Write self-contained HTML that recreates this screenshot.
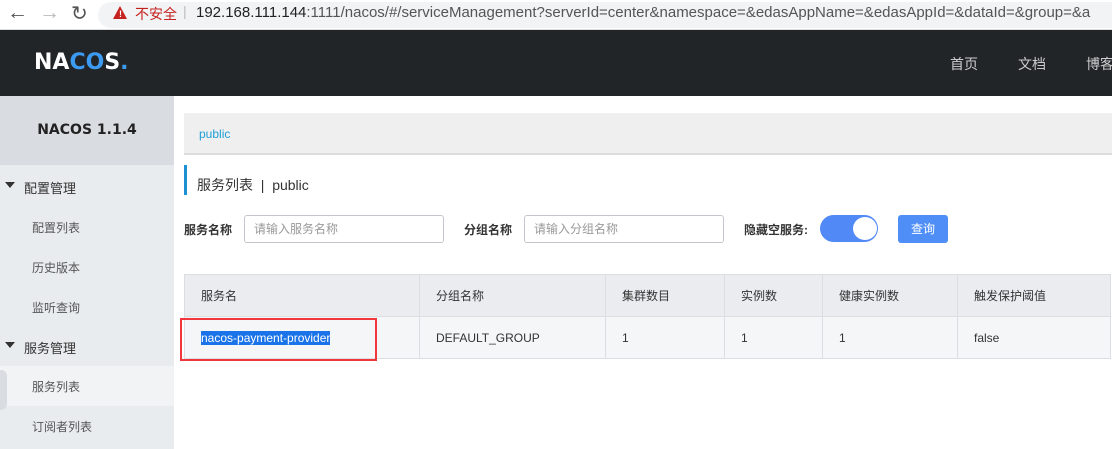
<!DOCTYPE html>
<html><head><meta charset="utf-8"><style>
*{margin:0;padding:0;box-sizing:border-box}
body{width:1112px;height:449px;overflow:hidden;background:#fff;font-family:"Liberation Sans","Noto Sans CJK SC",sans-serif;position:relative;color:#333}
.a{position:absolute}
.url{left:0;top:0;width:1112px;height:30px;background:#fff;border-bottom:1px solid #ddd}
.omni{left:98px;top:2px;width:1030px;height:26px;background:#f1f3f4;border-radius:13px}
.hdr{left:0;top:30px;width:1112px;height:66px;background:#222528}
.side{left:0;top:96px;width:174px;height:353px;background:#e9ecef}
.stitle{left:0;top:96px;width:174px;height:69px;background:#d9dde2;font-weight:bold;font-size:14px;color:#222;text-align:center;line-height:69px;font-family:"DejaVu Sans",sans-serif}
.mi{font-size:13px;color:#333}
.si{font-size:12px;color:#555}
td,th{font-size:12px;color:#333;text-align:left;font-weight:normal;padding-left:16px;border:1px solid #dcdee3}
table{border-collapse:collapse;position:absolute;left:184px;top:274px;width:927px}
th{height:42px;background:#ebecf0}
td{height:42px;background:#f5f6f8}
.lbl{font-size:12px;font-weight:bold;color:#333}
.inp{height:28px;border:1px solid #c4c6cf;border-radius:3px;font-size:12px;color:#999;padding-left:9px;line-height:26px;background:#fff}
</style></head><body>
<div class="a url"></div>
<div class="a omni"></div>
<div class="a" style="left:7px;top:1px;font-size:21px;color:#555">&#8592;</div>
<div class="a" style="left:39px;top:1px;font-size:21px;color:#bbb">&#8594;</div>
<div class="a" style="left:71px;top:1px;font-size:20px;color:#555">&#8635;</div>
<div class="a" style="left:113px;top:6px;width:0;height:0;border-left:7px solid transparent;border-right:7px solid transparent;border-bottom:13px solid #c5221f"></div>
<div class="a" style="left:119px;top:9px;font-size:9px;color:#fff;font-weight:bold">!</div>
<div class="a" style="left:135px;top:4px;font-size:14px;color:#c5221f">不安全</div>
<div class="a" style="left:183px;top:3px;font-size:14px;color:#bbb">|</div>
<div class="a" style="left:196px;top:4px;font-size:15px;color:#222;white-space:nowrap">192.168.111.144<span style="color:#555">:1111/nacos/#/serviceManagement?serverId=center&amp;namespace=&amp;edasAppName=&amp;edasAppId=&amp;dataId=&amp;group=&amp;a</span></div>
<div class="a hdr"></div>
<div class="a" style="left:34px;top:50px;font-size:22px;font-weight:bold;color:#fff;font-family:'DejaVu Sans',sans-serif">N<span>A</span><span style="color:#3c9bf0">CO</span>S<span style="color:#3c9bf0">.</span></div>
<div class="a" style="left:950px;top:54px;font-size:14px;color:#ccc">首页</div>
<div class="a" style="left:1018px;top:54px;font-size:14px;color:#ccc">文档</div>
<div class="a" style="left:1086px;top:54px;font-size:14px;color:#ccc;white-space:nowrap">博客</div>
<div class="a side"></div>
<div class="a stitle">NACOS 1.1.4</div>
<div class="a" style="left:5px;top:182px;border-left:5px solid transparent;border-right:5px solid transparent;border-top:6px solid #333"></div>
<div class="a mi" style="left:24px;top:178px">配置管理</div>
<div class="a si" style="left:32px;top:219px">配置列表</div>
<div class="a si" style="left:32px;top:259px">历史版本</div>
<div class="a si" style="left:32px;top:299px">监听查询</div>
<div class="a" style="left:5px;top:342px;border-left:5px solid transparent;border-right:5px solid transparent;border-top:6px solid #333"></div>
<div class="a mi" style="left:24px;top:338px">服务管理</div>
<div class="a" style="left:0;top:366px;width:174px;height:40px;background:#f2f3f5"></div>
<div class="a" style="left:0;top:370px;width:7px;height:40px;background:#d9dde2;border-radius:0 6px 6px 0"></div>
<div class="a si" style="left:32px;top:378px">服务列表</div>
<div class="a si" style="left:32px;top:418px">订阅者列表</div>
<div class="a" style="left:184px;top:113px;width:928px;height:42px;background:#efefef;border-bottom:2px solid #ddd"></div>
<div class="a" style="left:199px;top:127px;font-size:12px;color:#1e9ed8">public</div>
<div class="a" style="left:184px;top:165px;width:3px;height:30px;background:#1e8fd0"></div>
<div class="a" style="left:197px;top:175px;font-size:14px;color:#333">服务列表 &nbsp;| &nbsp;public</div>
<div class="a lbl" style="left:184px;top:221px">服务名称</div>
<div class="a inp" style="left:244px;top:215px;width:200px">请输入服务名称</div>
<div class="a lbl" style="left:464px;top:221px">分组名称</div>
<div class="a inp" style="left:524px;top:215px;width:200px">请输入分组名称</div>
<div class="a lbl" style="left:744px;top:221px">隐藏空服务:</div>
<div class="a" style="left:820px;top:215px;width:58px;height:27px;background:#5189f7;border-radius:14px"></div>
<div class="a" style="left:853px;top:217px;width:24px;height:23px;background:#fff;border-radius:50%"></div>
<div class="a" style="left:898px;top:215px;width:50px;height:28px;background:#4f8ef6;border-radius:3px;color:#fff;font-size:12px;text-align:center;line-height:28px">查询</div>
<table>
<tr><th style="width:235px">服务名</th><th style="width:186px">分组名称</th><th style="width:119px">集群数目</th><th style="width:98px">实例数</th><th style="width:135px">健康实例数</th><th>触发保护阈值</th></tr>
<tr><td><span style="background:#1a73e8;color:#fff">nacos-payment-provider</span></td><td>DEFAULT_GROUP</td><td>1</td><td>1</td><td>1</td><td>false</td></tr>
</table>
<div class="a" style="left:180px;top:318px;width:197px;height:43px;border:2px solid #f0373b"></div>
</body></html>
